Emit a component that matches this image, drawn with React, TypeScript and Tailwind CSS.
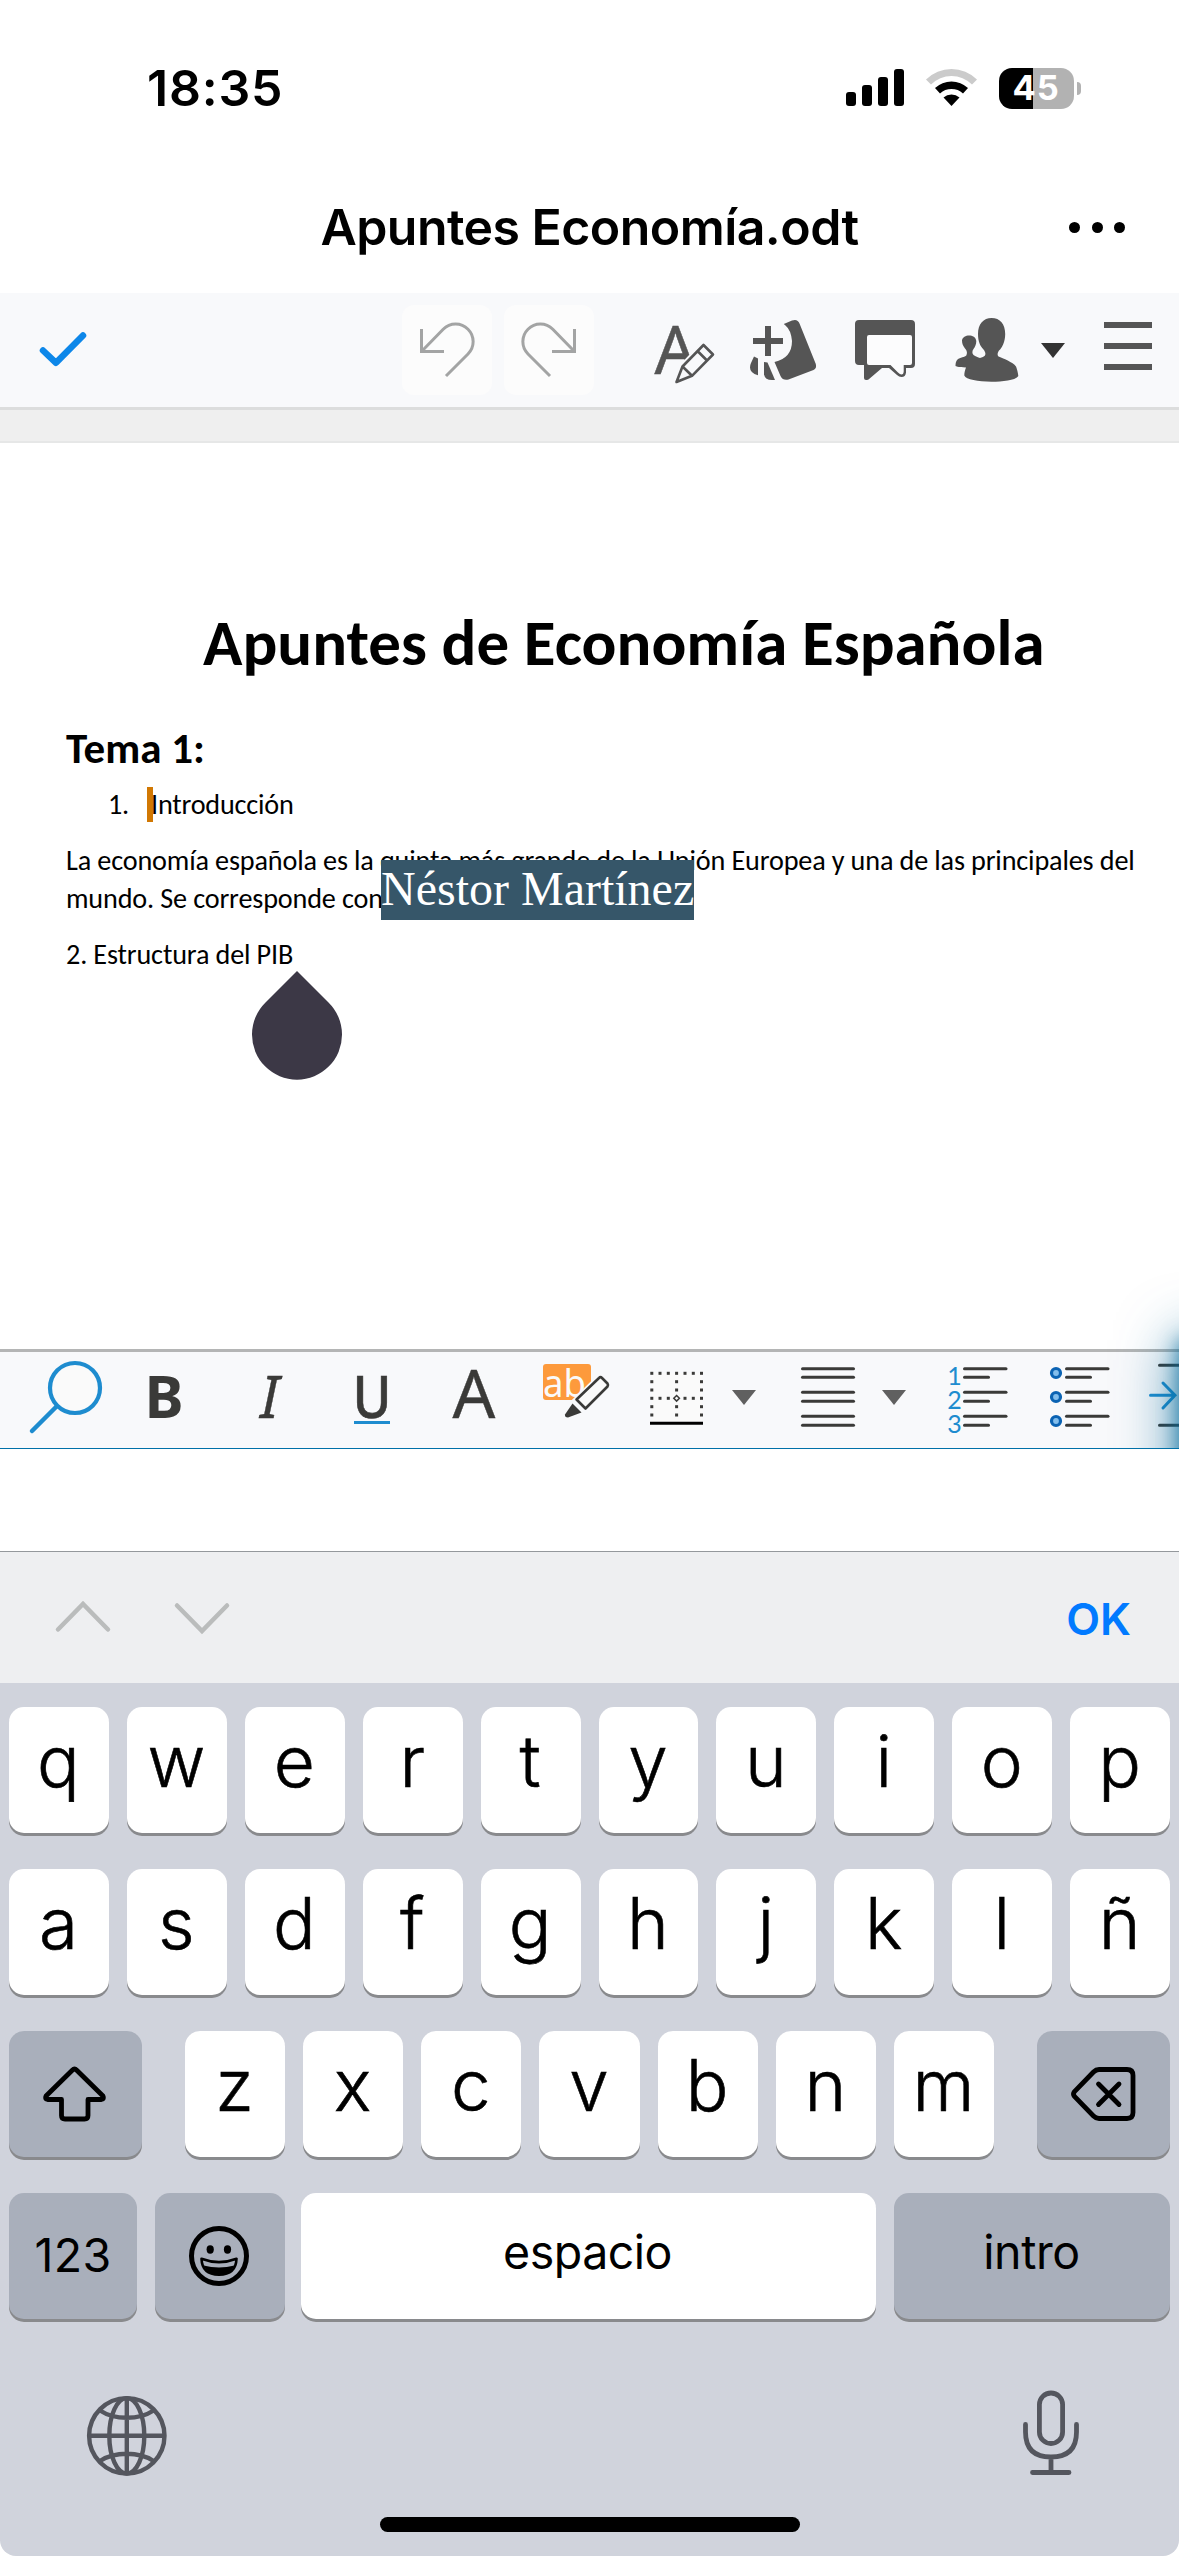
import type { ReactNode } from "react";

type Box = [x: number, y: number, w: number, h: number];

function Icon({ box, className = "", children }: { box: Box; className?: string; children: ReactNode }) {
  return (
    <svg viewBox={box.join(" ")} width={box[2]} height={box[3]} className={`block shrink-0 overflow-visible ${className}`} fill="none">
      {children}
    </svg>
  );
}

function StatusBar() {
  return (
    <div className="flex h-[176px] shrink-0 items-center justify-between pl-[147px] pr-[98px]">
      <span className="text-[50px] leading-[60px] font-semibold tracking-[0.8px]">18:35</span>
      <div className="flex items-center">
        <Icon box={[846, 67, 58, 42]}>
          <g fill="#000">
            <rect x="846" y="92" width="10" height="14" rx="3" />
            <rect x="862" y="85" width="10" height="21" rx="3" />
            <rect x="878" y="77" width="10" height="29" rx="3" />
            <rect x="894" y="69" width="10" height="37" rx="3" />
          </g>
        </Icon>
        <Icon box={[926, 67, 51, 42]} className="ml-[22px]">
          <path d="M926 79.5a36 36 0 0 1 51 0l-5 5a29 29 0 0 0 -41 0z" fill="#cbcbcb" />
          <path d="M935 88a24 24 0 0 1 33 0l-5 5.5a17 17 0 0 0 -23 0z" fill="#000" />
          <path d="M943.5 97.500a12 12 0 0 1 16 0L951.500 106z" fill="#000" />
        </Icon>
        <div className="relative ml-[22px] flex h-[41px] w-[75px] items-center justify-center overflow-hidden rounded-[13px] bg-[linear-gradient(90deg,#000_34px,#b2b2b2_34px)]">
          <span className="pr-[1px] text-[34.500px] leading-none font-bold tracking-[0.8px] text-white">45</span>
        </div>
        <div className="ml-[3px] h-[13px] w-[4px] rounded-r-full bg-[#b2b2b2]" />
      </div>
    </div>
  );
}

function TitleBar() {
  return (
    <div className="relative flex h-[117px] shrink-0 items-start justify-center pt-[21px]">
      <h1 className="text-[50px] leading-[60px] font-semibold tracking-[-0.55px]">Apuntes Economía.odt</h1>
      <div className="absolute top-[46px] right-[54px] flex gap-[11.500px]">
        <i className="size-[11px] rounded-full bg-black" />
        <i className="size-[11px] rounded-full bg-black" />
        <i className="size-[11px] rounded-full bg-black" />
      </div>
    </div>
  );
}

function TopToolbar() {
  return (
    <div className="flex h-[117px] shrink-0 border-b-[3px] border-[#dcdddd] bg-[#f8f9fb] pl-[36px]">
      <Icon box={[36, 293, 54, 114]}>
        <path d="M43 350.500L56 362.800L83 335.500" stroke="#0d87e9" strokeWidth="6.500" strokeLinecap="round" strokeLinejoin="round" />
      </Icon>
      <div className="mt-[12px] ml-auto size-[90px] rounded-[12px] bg-[#fcfcfc]">
        <Icon box={[402, 305, 90, 90]}>
          <path d="M421.500 329V351.500H444M422 351L443.200 329.200A17.500 17.500 0 1 1 468 354L446 376" stroke="#a3a4a4" strokeWidth="3" />
        </Icon>
      </div>
      <div className="mt-[12px] ml-[12px] size-[90px] rounded-[12px] bg-[#fcfcfc]">
        <Icon box={[402, 305, 90, 90]} className="-scale-x-100">
          <path d="M421.500 329V351.500H444M422 351L443.200 329.200A17.500 17.500 0 1 1 468 354L446 376" stroke="#a3a4a4" strokeWidth="3" />
        </Icon>
      </div>
      <Icon box={[650, 293, 68, 114]} className="ml-[56px]">
        <text x="675.500" y="374" textAnchor="middle" fontFamily="Noto Sans, sans-serif" fontSize="67" fontWeight="400" textLength="42" lengthAdjust="spacingAndGlyphs" fill="#555" stroke="#555" strokeWidth="0.500">A</text>
        <path d="M675.600 383L682 367L703.500 344L714 354.500L692 376.500Z" fill="#f8f9fb" stroke="#f8f9fb" strokeWidth="6" />
        <path d="M676.500 382L682.500 366.500L703.500 345L713 354.500L692 375.800Z M697.500 351L707 360.500M682.500 366.500L692 375.800" stroke="#555" strokeWidth="2.600" strokeLinejoin="round" />
      </Icon>
      <Icon box={[748, 293, 72, 114]} className="ml-[30px]">
        <g fill="#555">
          <path d="M765 326h6v12h12v6h-12v12h-6v-12h-12v-6h12z" />
          <path d="M783.800 324L792 320.600Q797.500 318.500 799.500 323.500L815.800 364Q817 368.500 813.500 370L788.500 379.500Q783 381 780.500 376L774.500 362Q792 358 792 341Q791 330 785.500 325.500Z" />
          <path d="M754 356.500L758 358.500V375.300Q750 373 750 367.500Q750 365 751 363Z" />
          <path d="M764 362L767.500 362.500L775 380H772Q765 380 764 374.500Z" />
        </g>
      </Icon>
      <Icon box={[852, 293, 66, 114]} className="ml-[32px]">
        <path d="M859 320H911Q915 320 915 324V364Q915 368 911 368H906V372.500Q905.500 377 901.500 377Q899 377 897 375L889 368H882L868.500 379.500Q864 381 864 378V365H859Q855 365 855 361V324Q855 320 859 320Z" fill="#555" />
        <path d="M869 335H910Q912 335 912 337V363Q912 365 910 365H903.700V371.500Q903.500 374.500 901.500 374.500Q900 374.500 898 372.500L890.500 365H869Q867 365 867 363V337Q867 335 869 335Z" fill="#fcfcfd" />
      </Icon>
      <Icon box={[952, 293, 70, 114]} className="ml-[34px]">
        <path d="M991.600 318C1000 318 1005.200 324 1005.200 334C1005.200 342 1002 348 999 350.500C997.500 353 997 355 998.500 356.500C1003 358.500 1013 362 1016 366.500C1017 369 1018 373 1018.300 376C1016 380 1003 381.700 991.600 381.700C978 381.700 966 379.500 964.300 375.500C964.300 373 965 370 966 367.500C962 367 958 367.500 955.500 366C955.500 363 956 361 957.500 359.500C960 357.500 965 357 966.300 355.500C967.500 353 967 350.500 965 348.500C963 346 962 343.500 962 340.500C963 333.800 975.500 333.800 976.300 341C976.300 344.500 975 347 973.500 349C972 351 972 353.500 973.500 355C975.500 356.500 978 357.300 980 358C982 357.300 984 356.800 985 355.500C986 353.500 985 351.500 983.500 349.500C980 346 978 341 978 334C978 324 983.500 318 991.600 318Z" fill="#555" />
      </Icon>
      <Icon box={[1040, 293, 26, 114]} className="ml-[18px]">
        <path d="M1041 343H1065L1053 358Z" fill="#333" />
      </Icon>
      <Icon box={[1104, 293, 48, 114]} className="mr-[27px] ml-[38px]">
        <path d="M1104 325H1152M1104 346H1152M1104 367H1152" stroke="#555" strokeWidth="6" />
      </Icon>
    </div>
  );
}

function Document() {
  return (
    <div className="relative h-[906px] shrink-0 overflow-hidden bg-white pl-[66px] font-[Carlito,Lato,sans-serif]">
      <h2 className="mt-[164px] ml-[137px] text-[65px] leading-[72px] font-bold whitespace-nowrap">Apuntes de Economía Española</h2>
      <h3 className="mt-[46px] text-[43px] leading-[48px] font-bold whitespace-nowrap">Tema 1:</h3>
      <div className="mt-[14px] flex h-[36px] text-[28.200px] leading-[36px] tracking-[-0.2px]">
        <span className="ml-[42px] w-[43px]">1.</span>
        <span className="relative">
          Introducción
          <i className="absolute top-0 left-[-4px] h-[35px] w-[6px] bg-[#d17803]" />
        </span>
      </div>
      <p className="mt-[18.500px] text-[28.200px] leading-[38.300px] tracking-[-0.150px] whitespace-nowrap">
        La economía española es la quinta más grande de la Unión Europea y una de las principales del
        <br />
        mundo. Se corresponde con
      </p>
      <p className="mt-[18px] text-[28.200px] leading-[38px] tracking-[-0.150px] whitespace-nowrap">2. Estructura del PIB</p>
      <div className="absolute top-[417px] left-[381px] flex h-[60px] w-[313px] items-center bg-[#365669] font-['Liberation_Serif',serif] text-[48px] leading-[58px] whitespace-nowrap text-white">
        <span className="-mt-[2px]">Néstor Martínez</span>
      </div>
      <svg viewBox="252 971 90 109" className="absolute top-[528px] left-[252px] h-[109px] w-[90px]">
        <path d="M297 971L328.500 1002.500A45 45 0 1 1 265.500 1002.500Z" fill="#3c3846" />
      </svg>
    </div>
  );
}

const listLines = [1368.7, 1377.3, 1392.3, 1401.3, 1416.3, 1425.3];
const ink = "#3a3a38";
const dotCols = [651.8, 660, 668.3, 676.6, 685, 693.3, 701.5];
const dotRows = [1373.3, 1381.7, 1390, 1398.3, 1406.7, 1415];

function ListLines({ x }: { x: number }) {
  return (
    <>
      {listLines.map((y, i) => (
        <path key={y} d={`M${x + 1.500} ${y}H${i % 2 ? x + 25.5 : x + 43}`} stroke={ink} strokeWidth="3" strokeLinecap="round" />
      ))}
    </>
  );
}

function FormatToolbar() {
  return (
    <div className="flex h-[100px] shrink-0 overflow-hidden border-t-[3px] border-b border-t-[#b4b5b5] border-b-[#0070a8] bg-[#f8f9fb] pl-[28px]">
      <Icon box={[28, 1352, 76, 96]}>
        <path d="M57 1406L32 1431" stroke="#1e8ccf" strokeWidth="4.500" strokeLinecap="round" />
        <circle cx="75" cy="1388" r="25" fill="#fafafa" stroke="#1e8ccf" strokeWidth="4.200" />
      </Icon>
      <Icon box={[144, 1352, 40, 96]} className="ml-[40px]">
        <text x="144.600" y="1418" fontFamily="Noto Sans, sans-serif" fontSize="58.800" fontWeight="700" fill={ink}>B</text>
      </Icon>
      <Icon box={[250, 1352, 40, 96]} className="ml-[66px]">
        <text x="269.500" y="1418" textAnchor="middle" fontFamily="Noto Sans, sans-serif" fontStyle="italic" fontSize="58.800" fontWeight="400" textLength="19" lengthAdjust="spacingAndGlyphs" fill={ink} stroke={ink} strokeWidth="0.400">I</text>
      </Icon>
      <Icon box={[350, 1352, 44, 96]} className="ml-[60px]">
        <text x="372" y="1418" textAnchor="middle" fontFamily="Noto Sans, sans-serif" fontSize="58.800" fontWeight="500" textLength="39" lengthAdjust="spacingAndGlyphs" fill={ink} stroke={ink} strokeWidth="0.600">U</text>
        <path d="M354 1422.500H390" stroke="#1e8ccf" strokeWidth="3" />
      </Icon>
      <Icon box={[450, 1352, 48, 96]} className="ml-[56px]">
        <text x="474" y="1418" textAnchor="middle" fontFamily="Noto Sans, sans-serif" fontSize="67" fontWeight="400" fill={ink} stroke={ink} strokeWidth="0.400">A</text>
      </Icon>
      <Icon box={[540, 1352, 72, 96]} className="ml-[42px]">
        <rect x="543" y="1364" width="48" height="36" rx="3" fill="#fd9a3c" />
        <text x="543" y="1397" fontFamily="Noto Sans, sans-serif" fontSize="39" textLength="43" lengthAdjust="spacingAndGlyphs" fill="#fafafa">ab</text>
        <path d="M564.500 1417L572 1402L600 1374.500L610.500 1384L583 1412Z" fill="#f8f9fb" stroke="#f8f9fb" strokeWidth="3" />
        <path d="M576.500 1399.500L599 1378Q600.500 1376.500 602 1378L607.500 1383.500Q608.500 1385 607.500 1386.500L585.500 1408.500Z" stroke={ink} strokeWidth="2.600" strokeLinejoin="round" fill="#fafafa" />
        <path d="M572.500 1403.500L581.500 1412.500L568 1417.500Q564.500 1417.500 565 1414.500Z" fill={ink} />
      </Icon>
      <Icon box={[648, 1352, 58, 96]} className="ml-[36px]">
        <rect x="652" y="1373" width="50" height="48" fill="#fafafa" />
        <g fill={ink}>
          {dotRows.map((y, r) =>
            dotCols.map((x, c) =>
              r === 0 || r === 3 || c === 0 || c === 3 || c === 6 ? <rect key={`${r}-${c}`} x={x - 1.5} y={y - 1.5} width="3" height="3" /> : null,
            ),
          )}
        </g>
        <path d="M676.600 1395.500l2.800 2.800l-2.800 2.800l-2.800 -2.800z" fill="#fafafa" stroke={ink} strokeWidth="1.500" />
        <path d="M650 1423.200H703" stroke="#000" strokeWidth="3" />
      </Icon>
      <Icon box={[732, 1352, 24, 96]} className="ml-[26px]">
        <path d="M732 1390H756L744 1405Z" fill="#606060" />
      </Icon>
      <Icon box={[800, 1352, 56, 96]} className="ml-[44px]">
        {listLines.map((y) => (
          <path key={y} d={`M802.500 ${y}H853.500`} stroke={ink} strokeWidth="3" strokeLinecap="round" />
        ))}
      </Icon>
      <Icon box={[882, 1352, 24, 96]} className="ml-[26px]">
        <path d="M882 1390H906L894 1405Z" fill="#606060" />
      </Icon>
      <Icon box={[944, 1352, 66, 96]} className="ml-[38px]">
        <g fontFamily="Lato, sans-serif" fontSize="25" fill="#1e8ccf" textAnchor="middle">
          <text x="954.500" y="1385">1</text>
          <text x="954.500" y="1409">2</text>
          <text x="954.500" y="1433">3</text>
        </g>
        <ListLines x={963} />
      </Icon>
      <Icon box={[1046, 1352, 66, 96]} className="ml-[36px]">
        {[1373, 1397, 1421].map((y) => (
          <circle key={y} cx="1056" cy={y} r="4.500" fill="#83beec" stroke="#0b63b3" strokeWidth="3.200" />
        ))}
        <ListLines x={1065} />
      </Icon>
      <Icon box={[1146, 1352, 60, 96]} className="ml-[34px]">
        <path d="M1159.500 1365.300H1206M1159.500 1425.300H1206" stroke={ink} strokeWidth="3" strokeLinecap="round" />
        <path d="M1150.500 1395.300H1175M1163 1383L1175 1395.300L1163 1408" stroke="#1e8ccf" strokeWidth="3" strokeLinecap="round" />
      </Icon>
    </div>
  );
}

function AccessoryBar() {
  return (
    <div className="flex h-[132px] shrink-0 border-t border-[#94989c] bg-[#eeeff1] pl-[54px]">
      <Icon box={[54, 1552, 180, 131]}>
        <path d="M58 1629.500L83 1604L108 1629.500M177 1605.500L202 1631L227 1605.500" stroke="#babcbc" strokeWidth="4.500" strokeLinecap="round" />
      </Icon>
      <span className="mt-[37px] mr-[48px] ml-auto text-[44px] leading-[60px] font-semibold text-[#017aff]">OK</span>
    </div>
  );
}

const keyBase = "flex h-[126px] items-center justify-center rounded-[15px] shadow-[0_3px_0_#898a8d]";

function LetterKey({ label }: { label: string }) {
  return (
    <div className={`${keyBase} min-w-0 flex-1 bg-white pr-px pb-[17px] text-[71px] leading-none font-light [-webkit-text-stroke:0.6px_#000]`}>
      {label}
    </div>
  );
}

function Keyboard() {
  return (
    <div className="flex flex-1 flex-col rounded-b-[16px] bg-[#d0d3dc] px-[9px] pt-[24px]">
      <div className="flex flex-col gap-[36px]">
        {["qwertyuiop", "asdfghjklñ"].map((row) => (
          <div key={row} className="flex gap-[18px]">
            {row.split("").map((k) => (
              <LetterKey key={k} label={k} />
            ))}
          </div>
        ))}
        <div className="flex">
          <div className={`${keyBase} w-[133px] bg-[#a9afbb]`}>
            <Icon box={[9, 2031, 133, 126]}>
              <path d="M74.500 2069Q75.500 2069 77 2070.500L103 2096Q104.500 2099 101.500 2099.500H88V2115.500Q88 2119 84.500 2119H65Q61.500 2119 61.500 2115.500V2099.500H47.500Q44.500 2099 46 2096L72 2070.500Q73.500 2069 74.500 2069Z" stroke="#000" strokeWidth="4.800" strokeLinejoin="round" />
            </Icon>
          </div>
          <div className="mx-[43px] flex flex-1 gap-[18px]">
            {"zxcvbnm".split("").map((k) => (
              <LetterKey key={k} label={k} />
            ))}
          </div>
          <div className={`${keyBase} w-[133px] bg-[#a9afbb]`}>
            <Icon box={[1037, 2031, 133, 126]}>
              <path d="M1099 2069.500H1127Q1133 2069.500 1133 2075.500V2112.500Q1133 2118.500 1127 2118.500H1099Q1096 2118.500 1093.500 2116L1074.500 2096.500Q1072.500 2094 1074.500 2091.500L1093.500 2072Q1096 2069.500 1099 2069.500Z" stroke="#000" strokeWidth="4.800" />
              <path d="M1098.500 2084L1119 2104.500M1119 2084L1098.500 2104.500" stroke="#000" strokeWidth="4.800" strokeLinecap="round" />
            </Icon>
          </div>
        </div>
        <div className="flex">
          <div className={`${keyBase} w-[128px] bg-[#a9afbb] pb-px text-[46.500px] leading-none tracking-[0.3px]`}>123</div>
          <div className={`${keyBase} ml-[18px] w-[130px] bg-[#a9afbb]`}>
            <Icon box={[155, 2193, 130, 126]}>
              <circle cx="219" cy="2256" r="27.500" stroke="#000" strokeWidth="5" />
              <ellipse cx="210.200" cy="2249.500" rx="3.600" ry="4.200" fill="#000" />
              <ellipse cx="227.500" cy="2249.500" rx="3.600" ry="4.200" fill="#000" />
              <path d="M201.500 2258.800Q219 2265.500 236.500 2258.800Q236 2274.500 219 2274.800Q202 2274.500 201.500 2258.800Z" stroke="#000" strokeWidth="2.600" strokeLinejoin="round" />
              <path d="M203.500 2265.500Q219 2269.500 234.500 2265.500Q230 2275 219 2275Q208 2275 203.500 2265.500Z" fill="#000" />
            </Icon>
          </div>
          <div className={`${keyBase} ml-[16px] w-[575px] bg-white pr-[2px] pb-[8px] text-[46.500px] leading-none tracking-[-0.5px]`}>espacio</div>
          <div className={`${keyBase} ml-[18px] w-[276px] bg-[#a9afbb] pr-px pb-[8px] text-[46.500px] leading-none tracking-[-0.4px]`}>intro</div>
        </div>
      </div>
      <div className="mt-[67px] flex justify-between pr-[88px] pl-[75px]">
        <Icon box={[84, 2386, 86, 94]}>
          <g stroke="#54565e" strokeWidth="4.400">
            <circle cx="126.800" cy="2435.800" r="37.700" />
            <ellipse cx="126.800" cy="2435.800" rx="17.500" ry="37.700" />
            <path d="M126.800 2398V2473.500M89 2435.800H164.600M100 2410.500Q111 2417.800 126.800 2417.800T153.600 2410.500M100 2461Q111 2453.800 126.800 2453.800T153.600 2461" />
          </g>
        </Icon>
        <Icon box={[1020, 2386, 62, 94]}>
          <g stroke="#54565e" strokeWidth="4.800" strokeLinecap="round">
            <rect x="1039.400" y="2393" width="23.200" height="50.500" rx="11.600" />
            <path d="M1025.500 2424.500V2432Q1025.500 2457 1051 2457T1076.500 2432V2424.500M1051 2457V2472.500M1032.500 2472.500H1069" />
          </g>
        </Icon>
      </div>
      <div className="mt-[37px] h-[15px] w-[420px] self-center rounded-full bg-black" />
    </div>
  );
}

export default function App() {
  return (
    <div className="relative flex h-[2556px] w-[1179px] flex-col overflow-hidden bg-white font-[Inter,sans-serif] text-black">
      <StatusBar />
      <TitleBar />
      <TopToolbar />
      <div className="h-[33px] shrink-0 border-b-2 border-[#e6e7e7] bg-[#efefef]" />
      <Document />
      <FormatToolbar />
      <div className="h-[102px] shrink-0" />
      <AccessoryBar />
      <Keyboard />
      {/* Glow that hints at more tools past the right edge */}
      <div className="pointer-events-none absolute top-[1260px] right-0 h-[188px] w-[100px] overflow-hidden">
        <div className="absolute top-[80px] left-[100px] h-[172px] w-[60px] shadow-[0_0_60px_rgba(0,105,155,0.75),0_0_20px_rgba(0,105,155,0.75)]" />
      </div>
    </div>
  );
}
